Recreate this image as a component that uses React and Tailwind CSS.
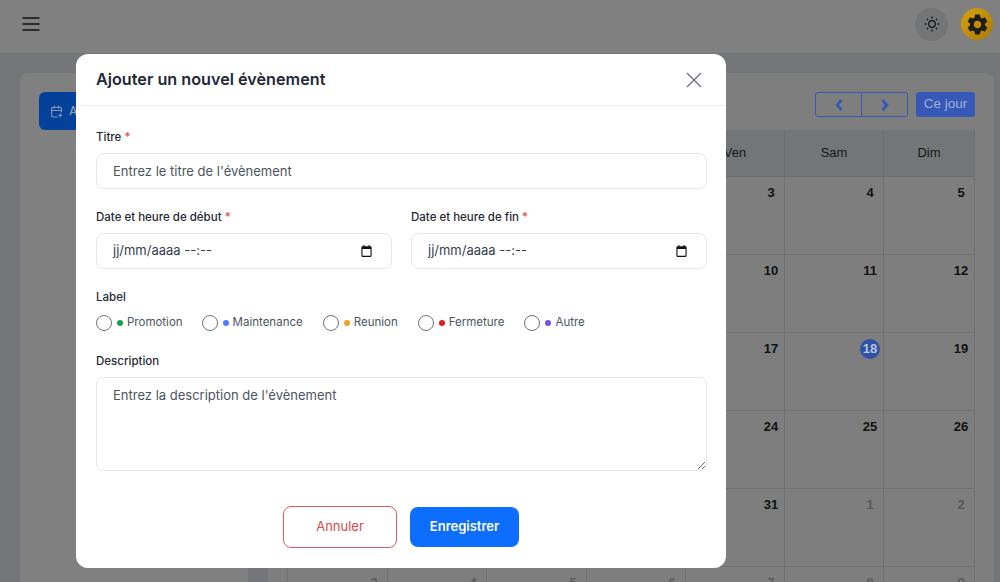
import React from 'react'
import { CalendarPlus } from 'lucide-react'
import { MdSettings } from 'react-icons/md'

const days = [
  ['29', true], ['30', true], ['1'], ['2'], ['3'], ['4'], ['5'],
  ['6'], ['7'], ['8'], ['9'], ['10'], ['11'], ['12'],
  ['13'], ['14'], ['15'], ['16'], ['17'], ['18'], ['19'],
  ['20'], ['21'], ['22'], ['23'], ['24'], ['25'], ['26'],
  ['27'], ['28'], ['29'], ['30'], ['31'], ['1', true], ['2', true],
  ['3', true], ['4', true], ['5', true], ['6', true], ['7', true], ['8', true], ['9', true],
]

const weekdays = ['Lun', 'Mar', 'Mer', 'Jeu', 'Ven', 'Sam', 'Dim']

const labels = [
  ['Promotion', 'bg-[#16a34a]', 'mr-[19px]'],
  ['Maintenance', 'bg-[#4f7cff]', 'mr-5'],
  ['Reunion', 'bg-[#f59e2c]', 'mr-5'],
  ['Fermeture', 'bg-[#e11d24]', 'mr-5'],
  ['Autre', 'bg-[#7c4fe8]', ''],
]

function Calendar() {
  return (
    <div className="grid grid-cols-[100px_99px_100px_99px_99px_99px_91px] border-l border-[#747474] font-['Liberation_Sans',sans-serif]">
      {weekdays.map((d) => (
        <div key={d} className="h-[47px] flex items-center justify-center bg-[#737578] border-r border-b border-[#6c6e70] text-[13px] text-[#171717]">
          {d}
        </div>
      ))}
      {days.map(([n, muted], i) => (
        <div key={i} className="h-[78px] border-r border-b border-[#727272] flex justify-end pt-[6px] pr-[3px]">
          {n === '18' && !muted ? (
            <span className="w-5 h-5 rounded-full bg-[#2f51a8] text-[#b9c4dd] text-[13px] font-bold flex items-center justify-center">{n}</span>
          ) : (
            <span className={`w-5 text-center text-[13px] font-bold leading-5 ${muted ? 'text-[#5a5a5a]' : 'text-[#111111]'}`}>{n}</span>
          )}
        </div>
      ))}
    </div>
  )
}

function Label({ children, required }) {
  return (
    <label className="block pt-[1px] text-[11.5px] font-medium leading-4 text-[#1f2937] mb-2">
      {children} {required && <span className="text-[#ef4444]">*</span>}
    </label>
  )
}

function DateField({ title }) {
  return (
    <div className="flex-1">
      <Label required>{title}</Label>
      <div className="h-9 pl-4 pr-[19px] flex items-center justify-between border border-[#e5e7eb] rounded-lg text-[13px] text-[#374151]">
        <span>jj/mm/aaaa --:--</span>
        <svg width="11" height="12" viewBox="0 0 14 14" preserveAspectRatio="none" className="text-[#111111]">
          <path fill="currentColor" d="M3 0h1.4v1.4h5.2V0H11v1.4h1.1c.8 0 1.4.6 1.4 1.4v9.8c0 .8-.6 1.4-1.4 1.4H1.9c-.8 0-1.4-.6-1.4-1.4V2.8c0-.8.6-1.4 1.4-1.4H3V0zM1.9 4.6v8h10.2v-8H1.9z" />
        </svg>
      </div>
    </div>
  )
}

export default function App() {
  return (
    <div className="relative h-[582px] overflow-hidden bg-[#75767a] font-['Inter',sans-serif]">
      <header className="h-[53px] bg-[#808080] flex items-center justify-between pl-[22px] pr-[7px] pb-[5px]">
        <svg width="18" height="14" viewBox="0 0 18 14" stroke="#111111" strokeWidth="1.4">
          <path d="M0.5 1h17M0.5 7h17M0.5 13h17" />
        </svg>
        <div className="flex items-center gap-[13px]">
          <button className="w-[33px] h-[33px] rounded-full bg-[#737577] flex items-center justify-center">
            <svg width="16" height="16" viewBox="0 0 16 16" fill="none" stroke="#16181d" strokeWidth="1.3">
              <circle cx="8" cy="8" r="3.3" />
              <path d="M8 .6v1.8M8 13.6v1.8M.6 8h1.8M13.6 8h1.8M2.8 2.8l1.2 1.2M12 12l1.2 1.2M2.8 13.2L4 12M12 4l1.2-1.2" />
            </svg>
          </button>
          <button className="w-8 h-8 rounded-full bg-linear-to-br from-[#d9a20c] to-[#a87a04] flex items-center justify-center">
            <MdSettings size={25} className="text-[#1e1e1e]" />
          </button>
        </div>
      </header>

      <main className="flex gap-5 pt-5 pl-5 pr-[7px]">
        <aside className="w-[228px] shrink-0 h-[600px] bg-[#808080] rounded-lg pt-[19px] pl-[19px]">
          <button className="w-[190px] h-[38px] rounded-md bg-[#04419b] flex items-center gap-[6px] px-[11px] text-xs font-medium text-[#8f9bb0] whitespace-nowrap">
            <CalendarPlus size={13} />
            Ajouter un évènement
          </button>
        </aside>

        <section className="flex-1 bg-[#7e7e7e] rounded-lg pt-[19px] pl-[19px] pr-[19px]">
          <div className="h-[38px] flex justify-end gap-2">
            <div className="flex h-[25px] w-[93px] border border-[#3659b8] rounded-[3px] text-[#3659b8]">
              <button className="flex-1 flex items-center justify-center border-r border-[#3659b8]">
                <svg width="8" height="12" viewBox="0 0 8 12" fill="none" stroke="currentColor" strokeWidth="2.8"><path d="M6.5 1L2.2 6l4.3 5" /></svg>
              </button>
              <button className="flex-1 flex items-center justify-center">
                <svg width="8" height="12" viewBox="0 0 8 12" fill="none" stroke="currentColor" strokeWidth="2.8"><path d="M1.5 1L5.8 6l-4.3 5" /></svg>
              </button>
            </div>
            <button className="h-[25px] w-[59px] rounded-[3px] bg-[#3659b8] text-[13.5px] text-[#9fb0d8] font-['Liberation_Sans',sans-serif]">Ce jour</button>
          </div>
          <Calendar />
        </section>
      </main>

      <div className="absolute left-[76px] top-[54px] w-[650px] h-[514px] bg-white rounded-xl flex flex-col">
        <div className="h-[52px] shrink-0 border-b border-[#f0f1f3] flex items-center justify-between pl-5 pr-6">
          <h2 className="text-[16.2px] font-semibold text-[#1f2937]">Ajouter un nouvel évènement</h2>
          <svg width="16" height="16" viewBox="0 0 16 16" stroke="#6b7280" strokeWidth="1.4">
            <path d="M1 1l14 14M15 1L1 15" />
          </svg>
        </div>

        <div className="pl-5 pr-[19px] pt-[22px]">
          <Label required>Titre</Label>
          <input
            className="w-full h-9 px-4 border border-[#e5e7eb] rounded-lg text-[13px] outline-none placeholder:text-[#4b5563]"
            placeholder="Entrez le titre de l'évènement"
          />

          <div className="flex gap-[19px] mt-[19px]">
            <DateField title="Date et heure de début" />
            <DateField title="Date et heure de fin" />
          </div>

          <div className="mt-[19px]">
            <Label>Label</Label>
            <div className="flex items-center h-4 mt-[10px]">
              {labels.map(([name, dot, gap]) => (
                <div key={name} className={`flex items-center ${gap}`}>
                  <span className="w-4 h-4 rounded-full border border-[#6b7280] mr-[5px]" />
                  <span className={`w-1.5 h-1.5 rounded-full mr-1 ${dot}`} />
                  <span className="text-[11.5px] text-[#4b5563]">{name}</span>
                </div>
              ))}
            </div>
          </div>

          <div className="mt-[21px]">
            <Label>Description</Label>
            <textarea
              className="block w-full h-[94px] px-4 pt-[7px] border border-[#e5e7eb] rounded-md text-[13px] leading-5 outline-none placeholder:text-[#4b5563]"
              placeholder="Entrez la description de l'évènement"
            />
          </div>
        </div>

        <div className="flex justify-center items-center gap-[13px] mt-[35px]">
          <button className="w-[114px] h-[42px] border border-[#e35d5d] rounded-lg text-[13px] text-[#e04848]">Annuler</button>
          <button className="w-[109px] h-10 bg-[#0d6efd] rounded-lg text-[13px] font-semibold text-white">Enregistrer</button>
        </div>
      </div>
    </div>
  )
}
